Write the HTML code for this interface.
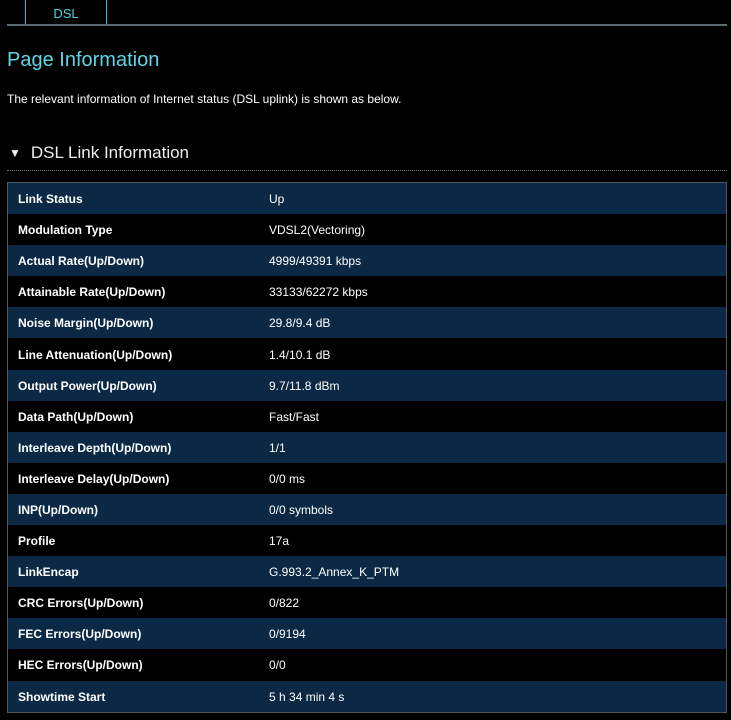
<!DOCTYPE html>
<html><head><meta charset="utf-8"><style>
body{margin:0;background:#000;width:731px;height:720px;overflow:hidden;font-family:"Liberation Sans",sans-serif;color:#fff;position:relative}
.tabline{position:absolute;left:7px;top:24px;width:720px;height:2px;background:#5a6a70}
.tab{position:absolute;left:25px;top:0;width:80px;height:24px;border:1px solid #2ab8d8;border-top:none;border-bottom:none;background:#000;color:#4fd0e0;font-size:13px;text-align:center;line-height:28px}
h1{position:absolute;left:7px;top:49px;margin:0;font-weight:normal;font-size:20px;color:#5fd6e6}
.desc{position:absolute;left:7px;top:92px;font-size:12px}
.sec{position:absolute;left:9px;top:143px;font-size:17px;color:#eee}
.sec span{font-size:12px;margin-right:10px;position:relative;top:-1px}
.dots{position:absolute;left:7px;top:170px;width:720px;border-top:1px dotted #777}
table{position:absolute;left:7px;top:182px;width:720px;border:1px solid #555;border-collapse:collapse}
td{height:30.1px;padding:1px 0 0 10px;font-size:12px;line-height:14px}
td:first-child{font-weight:bold;width:241px}
tr:nth-child(odd){background:#0b2944}
</style></head><body>
<div class="tabline"></div><div class="tab">DSL</div>
<h1>Page Information</h1>
<div class="desc">The relevant information of Internet status (DSL uplink) is shown as below.</div>
<div class="sec"><span>▼</span>DSL Link Information</div>
<div class="dots"></div>
<table>
<tr><td>Link Status</td><td>Up</td></tr>
<tr><td>Modulation Type</td><td>VDSL2(Vectoring)</td></tr>
<tr><td>Actual Rate(Up/Down)</td><td>4999/49391 kbps</td></tr>
<tr><td>Attainable Rate(Up/Down)</td><td>33133/62272 kbps</td></tr>
<tr><td>Noise Margin(Up/Down)</td><td>29.8/9.4 dB</td></tr>
<tr><td>Line Attenuation(Up/Down)</td><td>1.4/10.1 dB</td></tr>
<tr><td>Output Power(Up/Down)</td><td>9.7/11.8 dBm</td></tr>
<tr><td>Data Path(Up/Down)</td><td>Fast/Fast</td></tr>
<tr><td>Interleave Depth(Up/Down)</td><td>1/1</td></tr>
<tr><td>Interleave Delay(Up/Down)</td><td>0/0 ms</td></tr>
<tr><td>INP(Up/Down)</td><td>0/0 symbols</td></tr>
<tr><td>Profile</td><td>17a</td></tr>
<tr><td>LinkEncap</td><td>G.993.2_Annex_K_PTM</td></tr>
<tr><td>CRC Errors(Up/Down)</td><td>0/822</td></tr>
<tr><td>FEC Errors(Up/Down)</td><td>0/9194</td></tr>
<tr><td>HEC Errors(Up/Down)</td><td>0/0</td></tr>
<tr><td>Showtime Start</td><td>5 h 34 min 4 s</td></tr>
</table>
</body></html>
